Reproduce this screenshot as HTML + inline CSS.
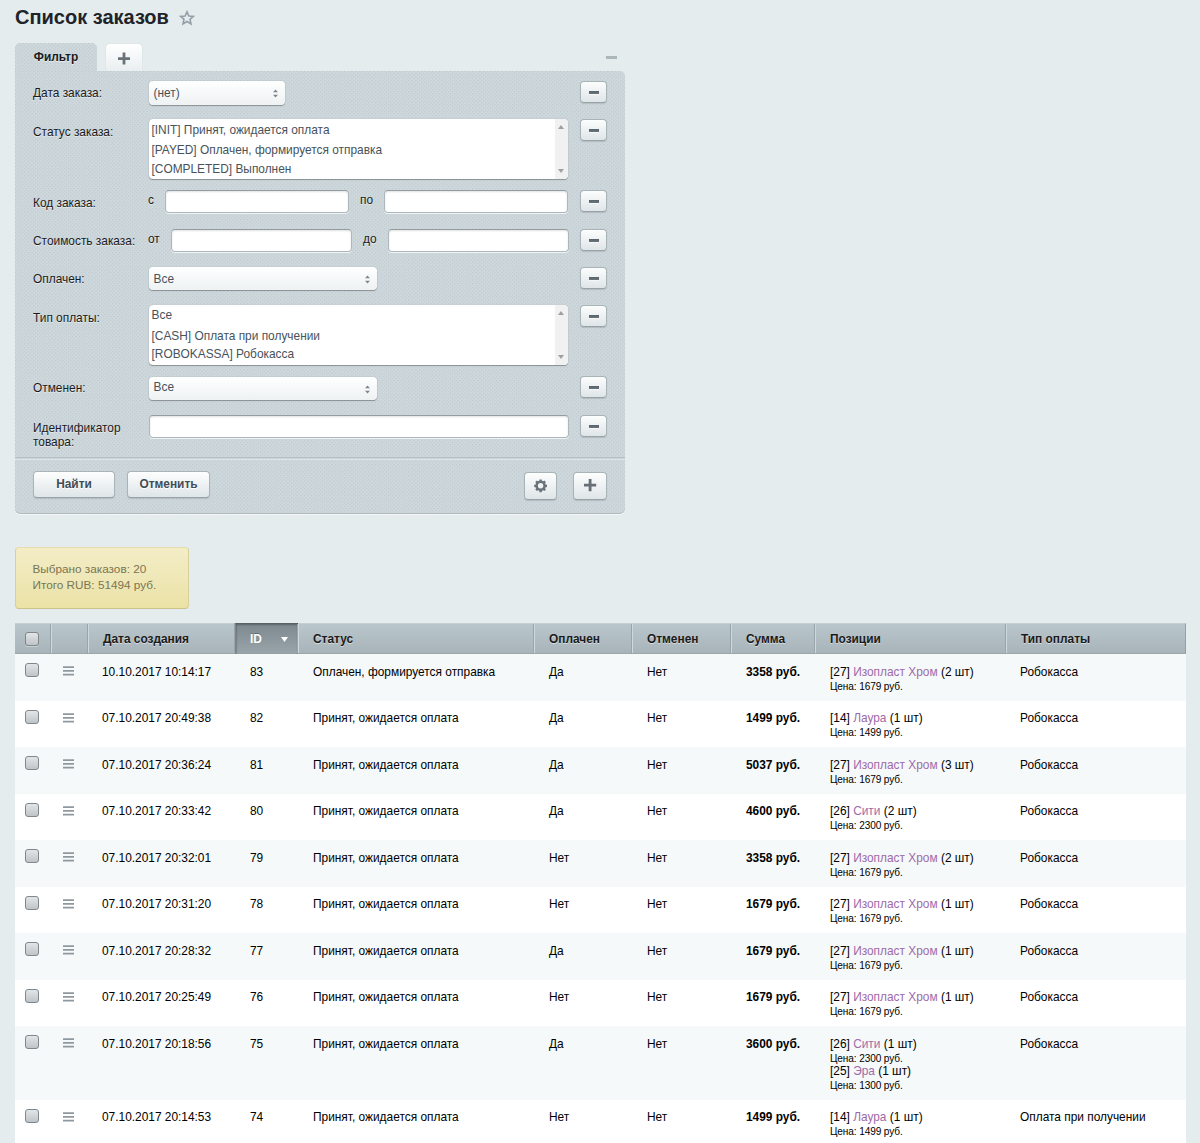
<!DOCTYPE html>
<html lang="ru">
<head>
<meta charset="utf-8">
<title>Список заказов</title>
<style>
html,body{margin:0;padding:0;}
body{width:1200px;height:1143px;overflow:hidden;background:#e5ecee;font-family:"Liberation Sans",Arial,sans-serif;font-size:13px;color:#000;position:relative;}
*{box-sizing:border-box;}
h1{position:absolute;left:15px;top:4px;margin:0;font-size:20px;line-height:26px;font-weight:bold;color:#20242a;white-space:nowrap;}
.star{position:absolute;left:179.3px;top:10.4px;width:16px;height:16px;}
/* filter */
.tab{position:absolute;left:15px;top:43px;width:82px;height:30px;background-color:#cfd9dd;background-image:radial-gradient(circle at 0.6px 0.6px,rgba(60,80,90,.13) 0.45px,transparent 0.95px),radial-gradient(circle at 2.43px 2.43px,rgba(60,80,90,.13) 0.45px,transparent 0.95px);background-size:3.66px 3.66px;border-radius:5px 5px 0 0;font-weight:bold;font-size:11.9px;color:#1b1b1b;text-align:center;line-height:29px;text-shadow:0 1px 0 rgba(255,255,255,.6);}
.tabplus{position:absolute;left:106px;top:44px;width:36px;height:27px;background:linear-gradient(#fff,#e9eef0);border-radius:4px 4px 0 0;box-shadow:0 0 1px rgba(0,0,0,.25);}
.collapse{position:absolute;left:605.5px;top:56px;width:11px;height:3px;background:#acb7bc;}
.panel{position:absolute;left:15px;top:71px;width:610px;height:443px;background-color:#cfd9dd;background-image:radial-gradient(circle at 0.6px 0.6px,rgba(60,80,90,.13) 0.45px,transparent 0.95px),radial-gradient(circle at 2.43px 2.43px,rgba(60,80,90,.13) 0.45px,transparent 0.95px);background-size:3.66px 3.66px;border-radius:0 5px 5px 5px;box-shadow:0 1px 0 rgba(255,255,255,.6), inset 0 -1px 0 rgba(0,0,0,.13);}
.lbl{position:absolute;left:33px;font-size:11.9px;color:#1b1b1b;line-height:13px;text-shadow:0 1px 0 rgba(255,255,255,.5);white-space:nowrap;}
.sm{position:absolute;font-size:11.9px;color:#1b1b1b;line-height:13px;text-shadow:0 1px 0 rgba(255,255,255,.5);}
.inp{position:absolute;height:23px;background:#fff;border:1px solid #adb8bc;border-top-color:#939ea3;border-radius:4px;box-shadow:0 1px 0 rgba(255,255,255,.7), inset 0 1px 2px rgba(0,0,0,.12);}
.sel{position:absolute;height:24px;background:linear-gradient(#fff,#eef2f3);border-radius:4px;box-shadow:0 0 1px rgba(0,0,0,.3),0 1px 1px rgba(0,0,0,.3);font-size:11.9px;color:#47525a;line-height:24px;padding-left:4.5px;}
.sel i{position:absolute;right:8px;top:8px;width:5px;height:9px;}
.list{position:absolute;left:149px;width:419px;height:60px;background:#fff;border-radius:4px;box-shadow:0 0 1px rgba(0,0,0,.3),0 1px 1px rgba(0,0,0,.3);font-size:11.9px;color:#47525a;overflow:hidden;}
.list div{position:absolute;left:0;height:19px;line-height:19px;padding-left:2.5px;white-space:nowrap;}
.list div:nth-child(1){top:2px}.list div:nth-child(2){top:22px}.list div:nth-child(3){top:41px}
.list .sb{position:absolute;left:auto;right:0;top:0;width:13px;height:60px;background:#f1f1f1;padding:0;}
.list .sb:before{content:"";position:absolute;left:3px;top:6px;border:3.5px solid transparent;border-top:0;border-bottom:4px solid #a0a0a0;}
.list .sb:after{content:"";position:absolute;left:3px;bottom:6.5px;border:3.5px solid transparent;border-bottom:0;border-top:4px solid #a0a0a0;}
.del{position:absolute;left:580px;width:27px;height:22px;border-radius:4px;background:linear-gradient(#fcfdfd,#dfe5e8);border:1px solid #a9b4b8;border-bottom-color:#98a3a8;box-shadow:0 1px 1px rgba(0,0,0,.12);}
.del:after{content:"";position:absolute;left:8px;top:8.5px;width:10px;height:3px;background:linear-gradient(#58626a,#6b757c);border-radius:0;box-shadow:0 1px 0 rgba(255,255,255,.5);}
.sep{position:absolute;left:15px;top:457px;width:610px;height:3px;background:linear-gradient(#b2bdc2 0,#b9c4c8 45%,#dde5e8 55%,#dde5e8 90%,rgba(221,229,232,0) 100%);}
.btn{position:absolute;top:471px;height:27px;border-radius:4px;background:linear-gradient(#fdfefe,#dfe5e8);border:1px solid #a9b4b8;border-bottom-color:#98a3a8;box-shadow:0 1px 1px rgba(0,0,0,.12);font-weight:bold;font-size:11.9px;color:#424d56;text-align:center;line-height:24px;text-shadow:0 1px 0 #fff;}
/* info */
.info{position:absolute;left:15px;top:547px;width:174px;height:62px;background:linear-gradient(#f3edc7,#ebe2a6);border:1px solid #d9cf9a;border-top-color:#e6dcae;border-bottom-color:#cdc38a;border-radius:4px;font-size:11.75px;color:#7a7553;line-height:16.3px;padding:13px 0 0 16.5px;white-space:nowrap;}
/* table */
.tbl{position:absolute;left:15px;top:623px;width:1171px;}
.th{position:absolute;left:0;top:0;width:1171px;height:31px;background:linear-gradient(#b9c6cb,#a8b4b9);border-top:1px solid #c5d0d4;border-bottom:1px solid #9aa6ab;border-right:1px solid #939fa4;}
.th span{position:absolute;top:0;height:29px;line-height:30px;font-weight:bold;font-size:11.9px;color:#1b1b1b;text-shadow:0 1px 0 rgba(255,255,255,.5);border-left:1px solid #cfd8dc;padding-left:0;white-space:nowrap;}
.th span b{position:absolute;left:-2px;top:0;width:1px;height:29px;background:#99a5aa;}
.th .srt{background:linear-gradient(#7c888d,#99a5aa);border-left-color:#7a868b;color:#fff;text-shadow:0 -1px 0 rgba(0,0,0,.25);box-shadow:inset 0 2px 2px rgba(0,0,0,.28), inset 1px 0 1px rgba(0,0,0,.1), inset -1px 0 1px rgba(0,0,0,.1);top:-1px!important;height:31px!important;line-height:32px!important;}
.row{position:absolute;left:0;width:1171px;background:#fff;}
.row.odd{background:#f5f9f9;}
.row span{position:absolute;top:10px;line-height:15px;font-size:11.9px;white-space:nowrap;color:#000;}
.row.r0 span,.row.sh span{top:11px;}
.row .pos{line-height:15px;}
.row .pos small{display:block;font-size:10.07px;letter-spacing:-0.1px;line-height:12px;position:relative;top:1px;}
.row .pos a{color:#a06aa9;text-decoration:none;}
.cb{position:absolute;left:10px;width:14px;height:14px;border-radius:3px;border:1px solid #7f878c;background:linear-gradient(#e3e6e8,#bfc4c7);box-shadow:0 1px 0 rgba(255,255,255,.35);}
.mn{position:absolute;left:48px;width:11px;height:10px;}
</style>
</head>
<body>
<h1>Список заказов</h1>
<svg class="star" viewBox="0 0 16 16"><path d="M8 1.8 L9.9 6 L14.4 6.4 L11 9.4 L12 13.9 L8 11.5 L4 13.9 L5 9.4 L1.6 6.4 L6.1 6 Z" fill="none" stroke="#949ea6" stroke-width="1.6" stroke-linejoin="miter"/></svg>

<div class="tab">Фильтр</div>
<div class="tabplus"><svg width="37" height="27" viewBox="0 0 37 27"><path d="M18 8.6v12M12 14.6h12" stroke="#6a7379" stroke-width="2.8" fill="none"/></svg></div>
<div class="collapse"></div>
<div class="panel"></div>

<div class="lbl" style="top:87px">Дата заказа:</div>
<div class="sel" style="left:149px;top:81px;width:136px">(нет)<svg style="position:absolute;right:7px;top:8px" width="5" height="9" viewBox="0 0 5 9"><path d="M0 3.2L2.5 0.6L5 3.2zM0 5.8L2.5 8.4L5 5.8z" fill="#7d868b"/></svg></div>
<div class="del" style="top:81px"></div>

<div class="lbl" style="top:126px">Статус заказа:</div>
<div class="list" style="top:119px"><div>[INIT] Принят, ожидается оплата</div><div>[PAYED] Оплачен, формируется отправка</div><div>[COMPLETED] Выполнен</div><div class="sb"></div></div>
<div class="del" style="top:119px"></div>

<div class="lbl" style="top:197px">Код заказа:</div>
<div class="sm" style="left:148px;top:194px">с</div>
<div class="inp" style="left:165px;top:190px;width:184px"></div>
<div class="sm" style="left:360px;top:194px">по</div>
<div class="inp" style="left:384px;top:190px;width:184px"></div>
<div class="del" style="top:190px"></div>

<div class="lbl" style="top:235px">Стоимость заказа:</div>
<div class="sm" style="left:148px;top:233px">от</div>
<div class="inp" style="left:171px;top:229px;width:181px"></div>
<div class="sm" style="left:363px;top:233px">до</div>
<div class="inp" style="left:388px;top:229px;width:181px"></div>
<div class="del" style="top:229px"></div>

<div class="lbl" style="top:273px">Оплачен:</div>
<div class="sel" style="left:149px;top:267px;width:228px;height:23px;line-height:24px">Все<svg style="position:absolute;right:7px;top:8px" width="5" height="9" viewBox="0 0 5 9"><path d="M0 3.2L2.5 0.6L5 3.2zM0 5.8L2.5 8.4L5 5.8z" fill="#7d868b"/></svg></div>
<div class="del" style="top:267px"></div>

<div class="lbl" style="top:312px">Тип оплаты:</div>
<div class="list" style="top:305px"><div style="top:1px">Все</div><div>[CASH] Оплата при получении</div><div style="top:40px">[ROBOKASSA] Робокасса</div><div class="sb"></div></div>
<div class="del" style="top:305px"></div>

<div class="lbl" style="top:382px">Отменен:</div>
<div class="sel" style="left:149px;top:377px;width:228px;height:23px;line-height:20px">Все<svg style="position:absolute;right:7px;top:8px" width="5" height="9" viewBox="0 0 5 9"><path d="M0 3.2L2.5 0.6L5 3.2zM0 5.8L2.5 8.4L5 5.8z" fill="#7d868b"/></svg></div>
<div class="del" style="top:376px"></div>

<div class="lbl" style="top:421px;white-space:normal;width:100px;line-height:14px">Идентификатор товара:</div>
<div class="inp" style="left:149px;top:415px;width:420px"></div>
<div class="del" style="top:415px"></div>

<div class="sep"></div>
<div class="btn" style="left:33px;width:82px">Найти</div>
<div class="btn" style="left:127px;width:83px">Отменить</div>
<div class="btn" style="left:524px;top:472px;width:33px;height:28px"><svg style="position:absolute;left:-1px;top:-1px" width="33" height="27" viewBox="0 0 33 27"><g transform="translate(16.6 13.8)"><path d="M-1.33 -5.03L-1.12 -6.40L1.12 -6.40L1.33 -5.03L2.61 -4.50L3.74 -5.32L5.32 -3.74L4.50 -2.61L5.03 -1.33L6.40 -1.12L6.40 1.12L5.03 1.33L4.50 2.61L5.32 3.74L3.74 5.32L2.61 4.50L1.33 5.03L1.12 6.40L-1.12 6.40L-1.33 5.03L-2.61 4.50L-3.74 5.32L-5.32 3.74L-4.50 2.61L-5.03 1.33L-6.40 1.12L-6.40 -1.12L-5.03 -1.33L-4.50 -2.61L-5.32 -3.74L-3.74 -5.32L-2.61 -4.50ZM2.7 0A2.7 2.7 0 1 0 -2.7 0A2.7 2.7 0 1 0 2.7 0Z" fill="#6a7379" fill-rule="evenodd"/></g></svg></div>
<div class="btn" style="left:573px;top:472px;width:34px;height:28px"><svg style="position:absolute;left:-1px;top:-1px" width="34" height="27" viewBox="0 0 34 27"><path d="M17.1 7.1v12.2M11 13.2h12.2" stroke="#666f75" stroke-width="2.8" fill="none"/></svg></div>

<div class="info">Выбрано заказов: 20<br>Итого RUB: 51494 руб.</div>

<div class="tbl">
<div class="th"><span style="left:0;width:36px;border-left:0"><i class="cb" style="top:8px"></i></span><span style="left:36px;width:37px"><b></b></span><span style="left:73px;width:147px;padding-left:14px"><b></b>Дата создания</span><span class="srt" style="left:220px;width:63px;padding-left:14px"><b></b>ID<svg style="position:absolute;left:45px;top:14px" width="7" height="5" viewBox="0 0 7 5"><path d="M0 0h7L3.5 5z" fill="#fff"/></svg></span><span style="left:283px;width:236px;padding-left:14px"><b></b>Статус</span><span style="left:519px;width:98px;padding-left:14px"><b></b>Оплачен</span><span style="left:617px;width:99px;padding-left:14px"><b></b>Отменен</span><span style="left:716px;width:84px;padding-left:14px"><b></b>Сумма</span><span style="left:800px;width:191px;padding-left:14px"><b></b>Позиции</span><span style="left:991px;width:180px;padding-left:14px"><b></b>Тип оплаты</span></div>
<div class="row odd r0" style="top:31px;height:47px"><i class="cb" style="top:9px"></i><svg class="mn" style="top:12px" viewBox="0 0 11 10"><path d="M0 1.1h11M0 4.9h11M0 8.7h11" stroke="#8e999f" stroke-width="1.8" fill="none"/></svg><span style="left:87px">10.10.2017 10:14:17</span><span style="left:235px">83</span><span style="left:298px">Оплачен, формируется отправка</span><span style="left:534px">Да</span><span style="left:632px">Нет</span><span style="left:731px;font-weight:bold">3358 руб.</span><span class="pos" style="left:815px">[27] <a>Изопласт Хром</a> (2 шт)<small>Цена: 1679 руб.</small></span><span style="left:1005px">Робокасса</span></div>
<div class="row" style="top:78px;height:46px"><i class="cb" style="top:9px"></i><svg class="mn" style="top:12px" viewBox="0 0 11 10"><path d="M0 1.1h11M0 4.9h11M0 8.7h11" stroke="#8e999f" stroke-width="1.8" fill="none"/></svg><span style="left:87px">07.10.2017 20:49:38</span><span style="left:235px">82</span><span style="left:298px">Принят, ожидается оплата</span><span style="left:534px">Да</span><span style="left:632px">Нет</span><span style="left:731px;font-weight:bold">1499 руб.</span><span class="pos" style="left:815px">[14] <a>Лаура</a> (1 шт)<small>Цена: 1499 руб.</small></span><span style="left:1005px">Робокасса</span></div>
<div class="row odd sh" style="top:124px;height:47px"><i class="cb" style="top:9px"></i><svg class="mn" style="top:12px" viewBox="0 0 11 10"><path d="M0 1.1h11M0 4.9h11M0 8.7h11" stroke="#8e999f" stroke-width="1.8" fill="none"/></svg><span style="left:87px">07.10.2017 20:36:24</span><span style="left:235px">81</span><span style="left:298px">Принят, ожидается оплата</span><span style="left:534px">Да</span><span style="left:632px">Нет</span><span style="left:731px;font-weight:bold">5037 руб.</span><span class="pos" style="left:815px">[27] <a>Изопласт Хром</a> (3 шт)<small>Цена: 1679 руб.</small></span><span style="left:1005px">Робокасса</span></div>
<div class="row" style="top:171px;height:46px"><i class="cb" style="top:9px"></i><svg class="mn" style="top:12px" viewBox="0 0 11 10"><path d="M0 1.1h11M0 4.9h11M0 8.7h11" stroke="#8e999f" stroke-width="1.8" fill="none"/></svg><span style="left:87px">07.10.2017 20:33:42</span><span style="left:235px">80</span><span style="left:298px">Принят, ожидается оплата</span><span style="left:534px">Да</span><span style="left:632px">Нет</span><span style="left:731px;font-weight:bold">4600 руб.</span><span class="pos" style="left:815px">[26] <a>Сити</a> (2 шт)<small>Цена: 2300 руб.</small></span><span style="left:1005px">Робокасса</span></div>
<div class="row odd sh" style="top:217px;height:47px"><i class="cb" style="top:9px"></i><svg class="mn" style="top:12px" viewBox="0 0 11 10"><path d="M0 1.1h11M0 4.9h11M0 8.7h11" stroke="#8e999f" stroke-width="1.8" fill="none"/></svg><span style="left:87px">07.10.2017 20:32:01</span><span style="left:235px">79</span><span style="left:298px">Принят, ожидается оплата</span><span style="left:534px">Нет</span><span style="left:632px">Нет</span><span style="left:731px;font-weight:bold">3358 руб.</span><span class="pos" style="left:815px">[27] <a>Изопласт Хром</a> (2 шт)<small>Цена: 1679 руб.</small></span><span style="left:1005px">Робокасса</span></div>
<div class="row" style="top:264px;height:46px"><i class="cb" style="top:9px"></i><svg class="mn" style="top:12px" viewBox="0 0 11 10"><path d="M0 1.1h11M0 4.9h11M0 8.7h11" stroke="#8e999f" stroke-width="1.8" fill="none"/></svg><span style="left:87px">07.10.2017 20:31:20</span><span style="left:235px">78</span><span style="left:298px">Принят, ожидается оплата</span><span style="left:534px">Нет</span><span style="left:632px">Нет</span><span style="left:731px;font-weight:bold">1679 руб.</span><span class="pos" style="left:815px">[27] <a>Изопласт Хром</a> (1 шт)<small>Цена: 1679 руб.</small></span><span style="left:1005px">Робокасса</span></div>
<div class="row odd sh" style="top:310px;height:47px"><i class="cb" style="top:9px"></i><svg class="mn" style="top:12px" viewBox="0 0 11 10"><path d="M0 1.1h11M0 4.9h11M0 8.7h11" stroke="#8e999f" stroke-width="1.8" fill="none"/></svg><span style="left:87px">07.10.2017 20:28:32</span><span style="left:235px">77</span><span style="left:298px">Принят, ожидается оплата</span><span style="left:534px">Да</span><span style="left:632px">Нет</span><span style="left:731px;font-weight:bold">1679 руб.</span><span class="pos" style="left:815px">[27] <a>Изопласт Хром</a> (1 шт)<small>Цена: 1679 руб.</small></span><span style="left:1005px">Робокасса</span></div>
<div class="row" style="top:357px;height:46px"><i class="cb" style="top:9px"></i><svg class="mn" style="top:12px" viewBox="0 0 11 10"><path d="M0 1.1h11M0 4.9h11M0 8.7h11" stroke="#8e999f" stroke-width="1.8" fill="none"/></svg><span style="left:87px">07.10.2017 20:25:49</span><span style="left:235px">76</span><span style="left:298px">Принят, ожидается оплата</span><span style="left:534px">Нет</span><span style="left:632px">Нет</span><span style="left:731px;font-weight:bold">1679 руб.</span><span class="pos" style="left:815px">[27] <a>Изопласт Хром</a> (1 шт)<small>Цена: 1679 руб.</small></span><span style="left:1005px">Робокасса</span></div>
<div class="row odd sh" style="top:403px;height:74px"><i class="cb" style="top:9px"></i><svg class="mn" style="top:12px" viewBox="0 0 11 10"><path d="M0 1.1h11M0 4.9h11M0 8.7h11" stroke="#8e999f" stroke-width="1.8" fill="none"/></svg><span style="left:87px">07.10.2017 20:18:56</span><span style="left:235px">75</span><span style="left:298px">Принят, ожидается оплата</span><span style="left:534px">Да</span><span style="left:632px">Нет</span><span style="left:731px;font-weight:bold">3600 руб.</span><span class="pos" style="left:815px">[26] <a>Сити</a> (1 шт)<small>Цена: 2300 руб.</small>[25] <a>Эра</a> (1 шт)<small>Цена: 1300 руб.</small></span><span style="left:1005px">Робокасса</span></div>
<div class="row" style="top:477px;height:47px"><i class="cb" style="top:9px"></i><svg class="mn" style="top:12px" viewBox="0 0 11 10"><path d="M0 1.1h11M0 4.9h11M0 8.7h11" stroke="#8e999f" stroke-width="1.8" fill="none"/></svg><span style="left:87px">07.10.2017 20:14:53</span><span style="left:235px">74</span><span style="left:298px">Принят, ожидается оплата</span><span style="left:534px">Нет</span><span style="left:632px">Нет</span><span style="left:731px;font-weight:bold">1499 руб.</span><span class="pos" style="left:815px">[14] <a>Лаура</a> (1 шт)<small>Цена: 1499 руб.</small></span><span style="left:1005px">Оплата при получении</span></div>
</div>
</body>
</html>
